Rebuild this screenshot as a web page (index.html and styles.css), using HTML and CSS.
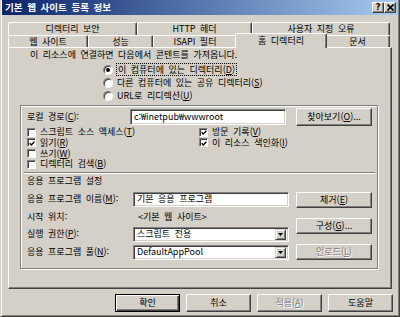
FILE: index.html
```html
<!DOCTYPE html>
<html lang="ko">
<head>
    <meta charset="UTF-8">
    <title>기본 웹 사이트 등록 정보</title>
    <link rel="stylesheet" href="styles.css">
</head>
<body>

<div class="window">
    <div class="titlebar">
        <span class="title">기본 웹 사이트 등록 정보</span>
        <div class="caption-btns">
            <span class="cbtn">?</span>
            <span class="cbtn">
                <svg width="7" height="7" viewBox="0 0 7 7"><path d="M0.5 0.5L6.5 6.5M6.5 0.5L0.5 6.5" stroke="#000" stroke-width="1.6"/></svg>
            </span>
        </div>
    </div>

    <div class="content">
        <div class="tabs">
            <div class="tab-row">
                <div class="tab w129">디렉터리 보안</div>
                <div class="tab w115">HTTP 헤더</div>
                <div class="tab w138">사용자 지정 오류</div>
            </div>
            <div class="tab-row row-front">
                <div class="tab w80">웹 사이트</div>
                <div class="tab w65">성능</div>
                <div class="tab w84">ISAPI 필터</div>
                <div class="tab tab-active">홈 디렉터리</div>
                <div class="tab w65">문서</div>
            </div>
        </div>

        <div class="panel">
            <div class="intro">이 리소스에 연결하면 다음에서 콘텐트를 가져옵니다.</div>

            <div class="radios">
                <div class="radio-row"><span class="radio checked"></span><span class="focus">이 컴퓨터에 있는 디렉터리(<u>D</u>)</span></div>
                <div class="radio-row"><span class="radio"></span><span>다른 컴퓨터에 있는 공유 디렉터리(<u>S</u>)</span></div>
                <div class="radio-row"><span class="radio"></span><span>URL로 리디렉션(<u>U</u>)</span></div>
            </div>

            <div class="groupbox">
                <div class="path-row">
                    <span class="path-label">로컬 경로(<u>C</u>):</span>
                    <div class="textbox path-box">c:₩inetpub₩wwwroot</div>
                    <div class="btn btn-browse"><span>찾아보기(<u>O</u>)...</span></div>
                </div>

                <div class="checks">
                    <div class="check-row"><span class="checkbox"></span><span>스크립트 소스 액세스(<u>T</u>)</span></div>
                    <div class="check-row"><span class="checkbox checked"><svg width="7" height="7" viewBox="0 0 7 7"><path d="M0.8 3.2L2.7 5.2L6.3 1.4" stroke="#000" stroke-width="1.6" fill="none"/></svg></span><span>방문 기록(<u>V</u>)</span></div>
                    <div class="check-row"><span class="checkbox checked"><svg width="7" height="7" viewBox="0 0 7 7"><path d="M0.8 3.2L2.7 5.2L6.3 1.4" stroke="#000" stroke-width="1.6" fill="none"/></svg></span><span>읽기(<u>R</u>)</span></div>
                    <div class="check-row"><span class="checkbox checked"><svg width="7" height="7" viewBox="0 0 7 7"><path d="M0.8 3.2L2.7 5.2L6.3 1.4" stroke="#000" stroke-width="1.6" fill="none"/></svg></span><span>이 리소스 색인화(<u>I</u>)</span></div>
                    <div class="check-row"><span class="checkbox"></span><span>쓰기(<u>W</u>)</span></div>
                    <div class="check-row"></div>
                    <div class="check-row"><span class="checkbox"></span><span>디렉터리 검색(<u>B</u>)</span></div>
                </div>

                <div class="separator"></div>
                <div class="section-title">응용 프로그램 설정</div>

                <div class="app-settings">
                    <div class="app-rows">
                        <div class="app-row">
                            <span class="app-label">응용 프로그램 이름(<u>M</u>):</span>
                            <div class="textbox app-box">기본 응용 프로그램</div>
                        </div>
                        <div class="app-row">
                            <span class="app-label">시작 위치:</span>
                            <span class="app-value">&lt;기본 웹 사이트&gt;</span>
                        </div>
                        <div class="app-row">
                            <span class="app-label">실행 권한(<u>P</u>):</span>
                            <div class="textbox app-box select"><span>스크립트 전용</span><span class="drop"><svg width="5" height="3" viewBox="0 0 5 3"><path d="M0 0H5L2.5 3Z" fill="#000"/></svg></span></div>
                        </div>
                        <div class="app-row">
                            <span class="app-label">응용 프로그램 풀(<u>N</u>):</span>
                            <div class="textbox app-box select"><span>DefaultAppPool</span><span class="drop"><svg width="5" height="3" viewBox="0 0 5 3"><path d="M0 0H5L2.5 3Z" fill="#000"/></svg></span></div>
                        </div>
                    </div>
                    <div class="app-buttons">
                        <div class="btn btn-side"><span>제거(<u>E</u>)</span></div>
                        <div class="btn btn-side"><span>구성(<u>G</u>)...</span></div>
                        <div class="btn btn-side disabled"><span>언로드(<u>L</u>)</span></div>
                    </div>
                </div>
            </div>
        </div>

        <div class="footer">
            <div class="btn btn-foot btn-default">확인</div>
            <div class="btn btn-foot">취소</div>
            <div class="btn btn-foot disabled"><span>적용(<u>A</u>)</span></div>
            <div class="btn btn-foot">도움말</div>
        </div>
    </div>
</div>

</body>
</html>
```

FILE: styles.css
```css
* {
    box-sizing: border-box;
}
body {
    margin: 0;
    background: #D4D0C8;
    font-family: "Noto Sans CJK KR", "Noto Sans", sans-serif;
    font-size: 9px;
    line-height: 10px;
    word-spacing: 2px;
    color: #000;
}
u {
    text-decoration: underline;
    text-underline-offset: 1px;
}
.window {
    width: 400px;
    height: 317px;
    background: #D4D0C8;
    border: 1px solid;
    border-top: 0;
    border-color: #D4D0C8 #404040 #404040 #D4D0C8;
    box-shadow: inset 1px 0 #fff, inset -1px -1px #808080;
    padding: 0 1px 1px 1px;
    display: flex;
    flex-direction: column;
}
.titlebar {
    height: 15px;
    background: linear-gradient(to right, #0A246A, #A6CAF0);
    display: flex;
    align-items: center;
    justify-content: space-between;
    padding: 0 2px 0 3px;
}
.title {
    color: #fff;
    font-weight: bold;
    font-size: 9.5px;
    line-height: 15px;
}
.caption-btns {
    display: flex;
}
.cbtn {
    width: 12px;
    height: 11px;
    background: #D4D0C8;
    border: 1px solid;
    border-color: #fff #404040 #404040 #fff;
    box-shadow: inset -1px -1px #808080;
    font: bold 8px "DejaVu Sans", sans-serif;
    display: flex;
    align-items: center;
    justify-content: center;
    line-height: 1;
}

.content {
    flex: 1;
    padding: 7px 6px 0 6px;
    display: flex;
    flex-direction: column;
}

/* tabs */
.tab-row {
    display: flex;
    height: 13px;
}
.row-front {
    height: 12px;
}
.tab {
    height: 100%;
    border: 1px solid;
    border-bottom: 0;
    border-color: #fff #404040 transparent #fff;
    box-shadow: inset -1px 0 #808080;
    border-radius: 2px 2px 0 0;
    text-align: center;
    line-height: 11px;
    white-space: nowrap;
}
.w129 { width: 129px; }
.w115 { width: 115px; }
.w138 { width: 138px; }
.w80 { width: 80px; }
.w65 { width: 65px; }
.w84 { width: 84px; }
.tab-active {
    width: 92px;
    height: 15px;
    margin: -2px -2px 0 -2px;
    background: #D4D0C8;
    position: relative;
    z-index: 1;
    line-height: 13px;
}

/* panel */
.panel {
    height: 242px;
    border: 1px solid;
    border-color: #fff #404040 #404040 #fff;
    box-shadow: inset -1px -1px #808080;
}
.intro {
    margin-top: 1px;
    padding-left: 21px;
    line-height: 11px;
}
.radios {
    margin: 3px 0 0 94px;
}
.radio-row {
    height: 13px;
    display: flex;
    align-items: center;
    gap: 4px;
}
.radio {
    width: 10px;
    height: 10px;
    border-radius: 50%;
    background: #fff;
    border: 1px solid;
    border-color: #808080 #fff #fff #808080;
    box-shadow: inset 1px 1px #404040;
    display: flex;
    align-items: center;
    justify-content: center;
}
.radio.checked::after {
    content: "";
    width: 4px;
    height: 4px;
    border-radius: 50%;
    background: #000;
}
.focus {
    outline: 1px dotted #000;
    padding: 0 1px;
    line-height: 11px;
}

.groupbox {
    margin: 3px 0 0 11px;
    width: 358px;
    height: 164px;
    border: 1px solid #808080;
    box-shadow: inset 1px 1px #fff, 1px 1px #fff;
    padding: 2px 0 0 6px;
}
.path-row {
    display: flex;
    align-items: center;
    height: 18px;
}
.path-label {
    width: 103px;
}
.textbox {
    background: #fff;
    border: 1px solid;
    border-color: #808080 #fff #fff #808080;
    box-shadow: inset 1px 1px #404040, inset -1px -1px #D4D0C8;
    padding-left: 3px;
    display: flex;
    align-items: center;
    white-space: nowrap;
}
.path-box {
    width: 156px;
    height: 16px;
}
.btn {
    background: #D4D0C8;
    border: 1px solid;
    border-color: #fff #404040 #404040 #fff;
    box-shadow: inset -1px -1px #808080;
    display: flex;
    align-items: center;
    justify-content: center;
    white-space: nowrap;
}
.btn-browse {
    margin-left: 10px;
    width: 76px;
    height: 18px;
}
.disabled {
    color: #808080;
    text-shadow: 1px 1px #fff;
}

.checks {
    margin-top: 1px;
    display: grid;
    grid-template-columns: 172px 1fr;
}
.check-row {
    height: 10.67px;
    display: flex;
    align-items: center;
    gap: 4px;
    white-space: nowrap;
}
.checkbox {
    width: 9px;
    height: 9px;
    flex-shrink: 0;
    background: #fff;
    border: 1px solid;
    border-color: #808080 #fff #fff #808080;
    box-shadow: inset 1px 1px #404040;
    display: flex;
    align-items: center;
    justify-content: center;
}
.checkbox svg {
    margin: 1px 0 0 1px;
}

.separator {
    margin: 2px 0 0 -3px;
    width: 351px;
    height: 2px;
    border-top: 1px solid #808080;
    border-bottom: 1px solid #fff;
}
.section-title {
    margin-top: 1px;
    line-height: 11px;
}

.app-settings {
    margin-top: 6px;
    display: flex;
    gap: 7px;
}
.app-rows {
    width: 262px;
    display: flex;
    flex-direction: column;
    gap: 2.67px;
}
.app-row {
    height: 15px;
    display: flex;
    align-items: center;
}
.app-label {
    width: 106px;
}
.app-value {
    padding-left: 5px;
}
.app-box {
    width: 156px;
    height: 15px;
}
.select {
    justify-content: space-between;
    padding-right: 2px;
}
.drop {
    width: 11px;
    height: 11px;
    background: #D4D0C8;
    border: 1px solid;
    border-color: #D4D0C8 #404040 #404040 #D4D0C8;
    box-shadow: inset 1px 1px #fff, inset -1px -1px #808080;
    display: flex;
    align-items: center;
    justify-content: center;
}
.app-buttons {
    display: flex;
    flex-direction: column;
    gap: 10px;
}
.btn-side {
    width: 76px;
    height: 16px;
}

.footer {
    margin-top: 5px;
    margin-right: -1px;
    display: flex;
    justify-content: flex-end;
    gap: 6px;
}
.btn-foot {
    width: 65px;
    height: 18px;
}
.btn-default {
    border-color: #000;
    box-shadow: inset 1px 1px #fff, inset -1px -1px #404040, inset -2px -2px #808080;
}
```
